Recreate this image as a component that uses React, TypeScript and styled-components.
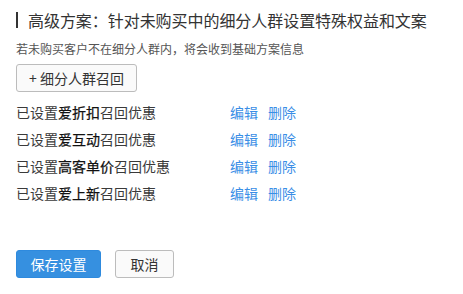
import React from 'react';
import styled, { createGlobalStyle } from 'styled-components';

const GlobalStyle = createGlobalStyle`
  body {
    margin: 0;
    background: #fff;
    font-family: "Noto Sans CJK SC", "Noto Sans", sans-serif;
    color: #333;
  }
`;

const Page = styled.div`
  padding: 10px 16px 0;
  width: 463px;
  box-sizing: border-box;
`;

const TitleRow = styled.div`
  display: flex;
  align-items: center;
  gap: 10px;
  height: 20px;
`;

const TitleBar = styled.span`
  width: 2px;
  height: 16px;
  background: #333;
`;

const Title = styled.h2`
  margin: 0;
  font-size: 16px;
  font-weight: 400;
  line-height: 20px;
  letter-spacing: -0.05px;
  color: #333;
`;

const Hint = styled.p`
  margin: 11px 0 0;
  font-size: 12px;
  line-height: 16px;
  color: #555;
`;

const AddButton = styled.button`
  margin-top: 7px;
  width: 121px;
  height: 28px;
  border: 1px solid #bcbcbc;
  border-radius: 3px;
  background: #fafafa;
  font-family: inherit;
  font-size: 14px;
  color: #333;
  cursor: pointer;
`;

const List = styled.div`
  margin-top: 6px;
  display: flex;
  flex-direction: column;
`;

const Row = styled.div`
  display: flex;
  align-items: center;
  height: 27px;
  font-size: 14px;
`;

const Label = styled.span`
  width: 214px;
  color: #3a3a3a;
`;

const Keyword = styled.b`
  font-weight: 400;
  color: #111;
  -webkit-text-stroke: 0.25px #111;
`;

const Actions = styled.div`
  display: flex;
  gap: 10px;
`;

const LinkButton = styled.a`
  color: #3a8ee6;
  cursor: pointer;
`;

const Footer = styled.div`
  display: flex;
  gap: 14px;
  margin-top: 44px;
`;

const Button = styled.button<{ $primary?: boolean }>`
  height: 28px;
  padding: 0;
  width: ${p => (p.$primary ? '85px' : '59px')};
  border-radius: 3px;
  border: 1px solid ${p => (p.$primary ? '#2e8ade' : '#bcbcbc')};
  background: ${p => (p.$primary ? '#3690e0' : '#fafafa')};
  color: ${p => (p.$primary ? '#fff' : '#333')};
  font-family: inherit;
  font-size: 14px;
  cursor: pointer;
`;

const offers = ['爱折扣', '爱互动', '高客单价', '爱上新'];

export default function App() {
  return (
    <Page>
      <GlobalStyle />
      <TitleRow>
        <TitleBar />
        <Title>高级方案：针对未购买中的细分人群设置特殊权益和文案</Title>
      </TitleRow>
      <Hint>若未购买客户不在细分人群内，将会收到基础方案信息</Hint>
      <AddButton>+ 细分人群召回</AddButton>
      <List>
        {offers.map(name => (
          <Row key={name}>
            <Label>
              已设置<Keyword>{name}</Keyword>召回优惠
            </Label>
            <Actions>
              <LinkButton>编辑</LinkButton>
              <LinkButton>删除</LinkButton>
            </Actions>
          </Row>
        ))}
      </List>
      <Footer>
        <Button $primary>保存设置</Button>
        <Button>取消</Button>
      </Footer>
    </Page>
  );
}
